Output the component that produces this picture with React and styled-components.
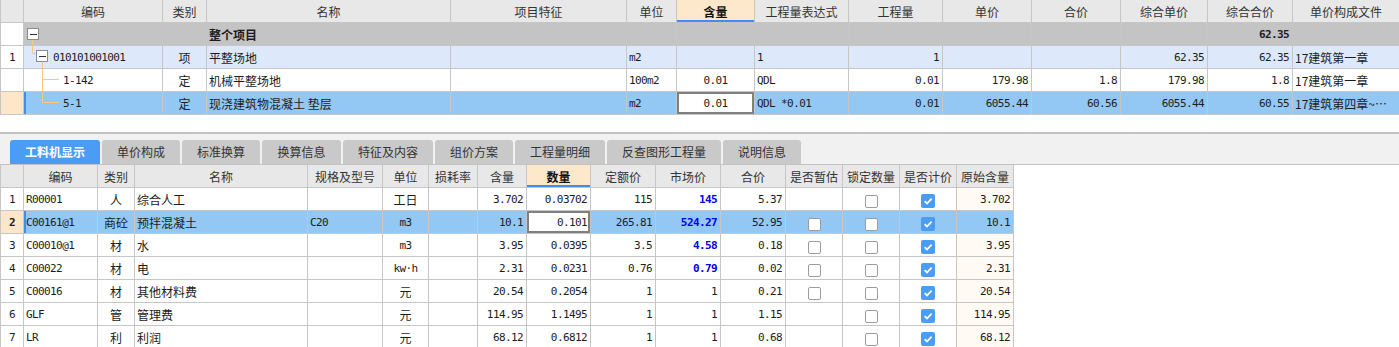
import React from 'react';
import styled, { createGlobalStyle, css } from 'styled-components';

const lineColor = '#c6c6c6';
const headerBg = '#e8e8e8';
const activeHeadBg = '#fee8cb';
const activeBlue = '#3d8ef0';
const selectedBg = '#93c8f5';
const peach = '#fee6c8';
const treeColor = '#f9c77c';
const cjk = '"Noto Sans CJK SC", "Noto Sans", sans-serif';
const mono = '"DejaVu Sans Mono", "Noto Sans CJK SC", monospace';

const GlobalStyle = createGlobalStyle`
  html, body { margin: 0; padding: 0; background: #fff; }
  body { font-family: ${cjk}; font-size: 12px; color: #1c1c1c; }
`;

const Page = styled.div`
  width: 1399px;
  height: 347px;
  overflow: hidden;
  background: #fff;
`;

const Grid = styled.table`
  table-layout: fixed;
  border-collapse: collapse;
  width: ${p => p.$width}px;
`;

const Th = styled.th`
  height: 22px;
  padding: 0;
  border: 1px solid ${lineColor};
  border-top: none;
  background: ${headerBg};
  color: #333;
  font-weight: normal;
  font-size: 12px;
  white-space: nowrap;
  overflow: hidden;
  ${p => p.$active && css`
    background: ${activeHeadBg};
    color: #111;
    font-weight: bold;
    box-shadow: inset 0 -2px 0 ${activeBlue};
  `}
`;

const Tr = styled.tr`
  background: ${p => p.$bg || '#fff'};
`;

const Td = styled.td`
  height: 22px;
  padding: 0 ${p => (p.$align === 'right' ? '3px' : '2px')};
  border: 1px solid ${lineColor};
  text-align: ${p => p.$align || 'left'};
  white-space: nowrap;
  overflow: hidden;
  font-family: ${p => (p.$mono ? mono : cjk)};
  font-size: ${p => (p.$mono ? '11px' : '12px')};
  letter-spacing: ${p => (p.$mono ? '-0.6px' : '0')};
  font-weight: ${p => (p.$bold ? 'bold' : 'normal')};
  color: ${p => p.$color || '#1c1c1c'};
  ${p => p.$bg && css`background: ${p.$bg};`}
  ${p => p.$marker && css`box-shadow: inset 2px 0 0 ${activeBlue};`}
  ${p => p.$edit && css`
    background: #fff;
    box-shadow: inset 0 0 0 2px #808080;
  `}
`;

const TreeWrap = styled.div`
  display: flex;
  align-items: center;
  height: 22px;
  font-family: ${mono};
  font-size: 11px;
  letter-spacing: -0.6px;
`;

const Gap = styled.div`
  height: 17px;
`;

const TabBar = styled.div`
  display: flex;
  align-items: flex-end;
  gap: 2px;
  height: 24px;
  padding: 6px 0 0 10px;
  background: #f1f1f1;
  border-top: 2px solid #c3c3c3;
  border-bottom: 1px solid #c3c3c3;
`;

const Tab = styled.div`
  width: ${p => p.$w}px;
  height: 24px;
  line-height: 24px;
  text-align: center;
  border-radius: 3px 3px 0 0;
  font-size: 12px;
  color: #333;
  background: #c9c9c9;
  ${p => p.$active && css`
    background: #4b9cf5;
    color: #fff;
    font-weight: bold;
  `}
`;

const Box = styled.span`
  display: inline-flex;
  align-items: center;
  justify-content: center;
  box-sizing: border-box;
  width: 13px;
  height: 13px;
  border: 1px solid #9c9c9c;
  border-radius: 2px;
  background: #fff;
  vertical-align: middle;
  ${p => p.$on && css`
    width: 14px;
    height: 14px;
    border: none;
    background: #4a9cf5;
  `}
`;

const CheckBox = ({ on }) => (
  <Box $on={on}>
    {on && (
      <svg width="14" height="14" viewBox="0 0 14 14">
        <path d="M3.6 7.2 L6 9.5 L10.6 4.6" fill="none" stroke="#fff" strokeWidth="1.8" />
      </svg>
    )}
  </Box>
);

const MinusBox = ({ x, y }) => (
  <g>
    <rect x={x + 0.5} y={y + 0.5} width="11" height="11" fill="#fff" stroke="#8c8c8c" />
    <line x1={x + 3} y1={y + 6.5} x2={x + 10} y2={y + 6.5} stroke="#333" />
  </g>
);

const TreeMark = ({ kind }) => {
  if (kind === 'root') {
    return (
      <svg width="20" height="22">
        <line x1="8.5" y1="17" x2="8.5" y2="22" stroke={treeColor} />
        <MinusBox x={3} y={5} />
      </svg>
    );
  }
  if (kind === 'item') {
    return (
      <svg width="29" height="22">
        <polyline points="8.5,0 8.5,7.5 12,7.5" fill="none" stroke={treeColor} />
        <line x1="18.5" y1="16" x2="18.5" y2="22" stroke={treeColor} />
        <MinusBox x={12} y={4} />
      </svg>
    );
  }
  return (
    <svg width="39" height="22">
      <polyline
        points={kind === 'mid' ? '18.5,0 18.5,22' : '18.5,0 18.5,10.5'}
        fill="none"
        stroke={treeColor}
      />
      <line x1="18.5" y1="10.5" x2="35" y2="10.5" stroke={treeColor} />
    </svg>
  );
};

const topCols = [
  { key: 'no', title: '', w: 23, align: 'center', mono: true },
  { key: 'code', title: '编码', w: 139 },
  { key: 'type', title: '类别', w: 44, align: 'center' },
  { key: 'name', title: '名称', w: 244 },
  { key: 'feature', title: '项目特征', w: 176 },
  { key: 'unit', title: '单位', w: 50, mono: true },
  { key: 'qty', title: '含量', w: 78, align: 'center', mono: true, active: true },
  { key: 'expr', title: '工程量表达式', w: 94, mono: true },
  { key: 'amount', title: '工程量', w: 94, align: 'right', mono: true },
  { key: 'price', title: '单价', w: 89, align: 'right', mono: true },
  { key: 'total', title: '合价', w: 89, align: 'right', mono: true },
  { key: 'cprice', title: '综合单价', w: 87, align: 'right', mono: true },
  { key: 'ctotal', title: '综合合价', w: 85, align: 'right', mono: true },
  { key: 'file', title: '单价构成文件', w: 107 },
];

const topRows = [
  { tree: 'root', bg: '#c4c4c4', bold: true, name: '整个项目', ctotal: '62.35' },
  {
    no: '1', tree: 'item', code: '010101001001', bg: '#dde9fb', type: '项', name: '平整场地',
    unit: 'm2', expr: '1', amount: '1', cprice: '62.35', ctotal: '62.35', file: '17建筑第一章',
  },
  {
    tree: 'mid', code: '1-142', type: '定', name: '机械平整场地', unit: '100m2', qty: '0.01',
    expr: 'QDL', amount: '0.01', price: '179.98', total: '1.8', cprice: '179.98', ctotal: '1.8',
    file: '17建筑第一章',
  },
  {
    tree: 'last', code: '5-1', selected: true, type: '定', name: '现浇建筑物混凝土 垫层', unit: 'm2',
    qty: '0.01', edit: 'qty', expr: 'QDL *0.01', amount: '0.01', price: '6055.44', total: '60.56',
    cprice: '6055.44', ctotal: '60.55', file: '17建筑第四章~…',
  },
];

const tabs = [
  { label: '工料机显示', w: 90 },
  { label: '单价构成', w: 78 },
  { label: '标准换算', w: 78 },
  { label: '换算信息', w: 79 },
  { label: '特征及内容', w: 90 },
  { label: '组价方案', w: 78 },
  { label: '工程量明细', w: 90 },
  { label: '反查图形工程量', w: 114 },
  { label: '说明信息', w: 78 },
];

const botCols = [
  { key: 'no', title: '', w: 23, align: 'center', mono: true },
  { key: 'code', title: '编码', w: 74, mono: true },
  { key: 'type', title: '类别', w: 37, align: 'center' },
  { key: 'name', title: '名称', w: 173 },
  { key: 'spec', title: '规格及型号', w: 75, mono: true },
  { key: 'unit', title: '单位', w: 46, align: 'center' },
  { key: 'loss', title: '损耗率', w: 49, align: 'right', mono: true },
  { key: 'qty', title: '含量', w: 49, align: 'right', mono: true },
  { key: 'num', title: '数量', w: 64, align: 'right', mono: true, active: true },
  { key: 'base', title: '定额价', w: 65, align: 'right', mono: true },
  { key: 'market', title: '市场价', w: 65, align: 'right', mono: true },
  { key: 'total', title: '合价', w: 65, align: 'right', mono: true },
  { key: 'est', title: '是否暂估', w: 57, align: 'center', check: true },
  { key: 'lock', title: '锁定数量', w: 57, align: 'center', check: true },
  { key: 'priced', title: '是否计价', w: 57, align: 'center', check: true },
  { key: 'orig', title: '原始含量', w: 57, align: 'right', mono: true, tint: '#fffaf3' },
];

const botRows = [
  { no: '1', code: 'R00001', type: '人', name: '综合人工', unit: '工日', qty: '3.702', num: '0.03702', base: '115', market: '145', hot: true, total: '5.37', est: null, lock: false, priced: true, orig: '3.702' },
  { no: '2', code: 'C00161@1', type: '商砼', name: '预拌混凝土', spec: 'C20', unit: 'm3', qty: '10.1', num: '0.101', base: '265.81', market: '524.27', hot: true, total: '52.95', est: false, lock: false, priced: true, orig: '10.1', selected: true },
  { no: '3', code: 'C00010@1', type: '材', name: '水', unit: 'm3', qty: '3.95', num: '0.0395', base: '3.5', market: '4.58', hot: true, total: '0.18', est: false, lock: false, priced: true, orig: '3.95' },
  { no: '4', code: 'C00022', type: '材', name: '电', unit: 'kw·h', qty: '2.31', num: '0.0231', base: '0.76', market: '0.79', hot: true, total: '0.02', est: false, lock: false, priced: true, orig: '2.31' },
  { no: '5', code: 'C00016', type: '材', name: '其他材料费', unit: '元', qty: '20.54', num: '0.2054', base: '1', market: '1', total: '0.21', est: false, lock: false, priced: true, orig: '20.54' },
  { no: '6', code: 'GLF', type: '管', name: '管理费', unit: '元', qty: '114.95', num: '1.1495', base: '1', market: '1', total: '1.15', est: null, lock: false, priced: true, orig: '114.95' },
  { no: '7', code: 'LR', type: '利', name: '利润', unit: '元', qty: '68.12', num: '0.6812', base: '1', market: '1', total: '0.68', est: null, lock: false, priced: true, orig: '68.12' },
];

const Colgroup = ({ cols }) => (
  <colgroup>
    {cols.map(c => <col key={c.key} style={{ width: c.w }} />)}
  </colgroup>
);

const HeadRow = ({ cols }) => (
  <thead>
    <tr>
      {cols.map(c => <Th key={c.key} $active={c.active}>{c.title}</Th>)}
    </tr>
  </thead>
);

function TopGrid() {
  return (
    <Grid $width={1399}>
      <Colgroup cols={topCols} />
      <HeadRow cols={topCols} />
      <tbody>
        {topRows.map((r, i) => (
          <Tr key={i} $bg={r.selected ? selectedBg : r.bg}>
            {topCols.map(c => {
              if (c.key === 'no') {
                return <Td key={c.key} $align="center" $mono $bg={r.selected ? peach : '#fff'}>{r.no}</Td>;
              }
              if (c.key === 'code') {
                return (
                  <Td key={c.key} style={{ padding: 0 }} $marker={r.selected}>
                    <TreeWrap>
                      <TreeMark kind={r.tree} />
                      {r.code}
                    </TreeWrap>
                  </Td>
                );
              }
              return (
                <Td
                  key={c.key}
                  $align={c.align}
                  $mono={c.mono}
                  $bold={r.bold}
                  $edit={r.edit === c.key}
                >
                  {r[c.key]}
                </Td>
              );
            })}
          </Tr>
        ))}
      </tbody>
    </Grid>
  );
}

function BottomGrid() {
  return (
    <Grid $width={1013}>
      <Colgroup cols={botCols} />
      <HeadRow cols={botCols} />
      <tbody>
        {botRows.map(r => (
          <Tr key={r.no} $bg={r.selected ? selectedBg : '#fff'}>
            {botCols.map(c => {
              if (c.key === 'no') {
                return (
                  <Td key={c.key} $align="center" $mono $bold={r.selected} $bg={r.selected ? peach : undefined}>
                    {r.no}
                  </Td>
                );
              }
              if (c.check) {
                const v = r[c.key];
                return (
                  <Td key={c.key} $align="center">
                    {v !== null && v !== undefined && <CheckBox on={v} />}
                  </Td>
                );
              }
              const hot = c.key === 'market' && r.hot;
              return (
                <Td
                  key={c.key}
                  $align={c.align}
                  $mono={c.mono || (c.key === 'unit' && /^[a-z]/.test(r.unit))}
                  $bold={hot}
                  $color={hot ? '#0000ee' : undefined}
                  $bg={!r.selected ? c.tint : undefined}
                  $marker={r.selected && c.key === 'code'}
                  $edit={r.selected && c.key === 'num'}
                >
                  {r[c.key]}
                </Td>
              );
            })}
          </Tr>
        ))}
      </tbody>
    </Grid>
  );
}

export default function App() {
  return (
    <Page>
      <GlobalStyle />
      <TopGrid />
      <Gap />
      <TabBar>
        {tabs.map((t, i) => (
          <Tab key={t.label} $w={t.w} $active={i === 0}>{t.label}</Tab>
        ))}
      </TabBar>
      <BottomGrid />
    </Page>
  );
}
